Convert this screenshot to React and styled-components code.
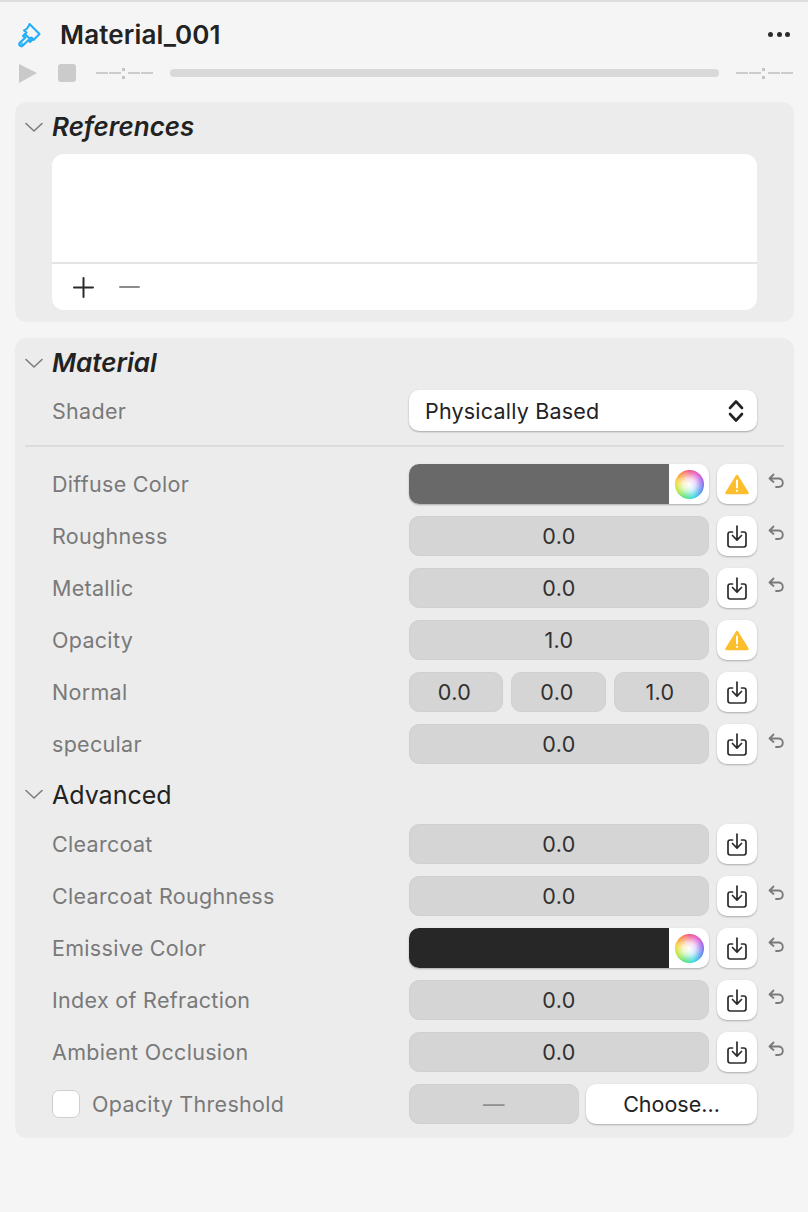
import styled, { createGlobalStyle } from 'styled-components';

const GlobalStyle = createGlobalStyle`
  html, body {
    margin: 0;
    padding: 0;
    background: #f5f5f5;
  }
  body {
    font-family: Inter, "Liberation Sans", sans-serif;
    color: #222222;
  }
`;

const Inspector = styled.div`
  width: 808px;
  height: 1212px;
  box-sizing: border-box;
  border-top: 2px solid #dedede;
  overflow: hidden;
`;

const Header = styled.header`
  display: flex;
  align-items: center;
  height: 54px;
  padding: 11px 18px 0 18px;
  box-sizing: border-box;
  margin-bottom: 5px;
`;

const Title = styled.h1`
  flex: 1;
  margin: 0 0 0 18px;
  font-size: 26px;
  font-weight: 600;
  letter-spacing: 0.15px;
  color: #222222;
`;

const MoreDots = styled.div`
  display: flex;
  gap: 3.5px;

  span {
    width: 5px;
    height: 5px;
    border-radius: 50%;
    background: #2b2b2b;
  }
`;

const Transport = styled.div`
  display: flex;
  align-items: center;
  height: 24px;
  padding: 0 15px 0 19px;
  margin-bottom: 17px;
`;

const StopSquare = styled.div`
  width: 18px;
  height: 18px;
  border-radius: 3px;
  background: #cbcbcb;
  margin: 0 20px 0 21px;
`;

const Time = styled.div`
  display: flex;
  align-items: center;
  width: 57px;
`;

const TimeDash = styled.span`
  width: 12px;
  height: 2px;
  background: #cccccc;
  margin-right: ${(p) => p.$gap || 0}px;
`;

const TimeColon = styled.span`
  width: 3px;
  height: 11px;
  margin: 0 3px 0 1px;
  background: radial-gradient(circle, #c4c4c4 1.5px, transparent 2px) 0 0 / 3px 3px no-repeat,
    radial-gradient(circle, #c4c4c4 1.5px, transparent 2px) 0 100% / 3px 3px no-repeat;
`;

const Progress = styled.div`
  flex: 1;
  height: 8px;
  border-radius: 4px;
  background: #d9d9d9;
  margin: 0 17px;
`;

const Panel = styled.section`
  margin: 0 14px 16px 15px;
  border-radius: 12px;
  background: #ececec;
  padding-bottom: ${(p) => p.$bottom}px;
`;

const SectionHead = styled.div`
  display: flex;
  align-items: center;
  height: ${(p) => p.$height}px;
  padding-left: 10px;
  gap: 9px;
`;

const SectionTitle = styled.h2`
  margin: ${(p) => (p.$plain ? '2px 0 0' : '0 0 1px')};
  font-size: ${(p) => (p.$plain ? 25 : 26)}px;
  font-weight: ${(p) => (p.$plain ? 400 : 600)};
  font-style: ${(p) => (p.$plain ? 'normal' : 'italic')};
  color: #222222;
`;

const ListBox = styled.div`
  margin: 2px 37px 0 37px;
  height: 156px;
  border-radius: 12px;
  background: #ffffff;
  display: flex;
  flex-direction: column;
`;

const ListBody = styled.div`
  height: 108px;
  border-bottom: 2px solid #e4e4e4;
`;

const ListTools = styled.div`
  display: flex;
  align-items: center;
  flex: 1;
  padding-left: 21px;
  gap: 25px;
`;

const ShaderRow = styled.div`
  display: grid;
  grid-template-columns: 357px 348px;
  align-items: center;
  height: 41px;
  margin-top: 2px;
  padding-left: 37px;
`;

const Divider = styled.div`
  height: 2px;
  background: #dcdcdc;
  margin: 14px 10px 17px 10px;
`;

const Rows = styled.div`
  display: flex;
  flex-direction: column;
  gap: 12px;
`;

const Row = styled.div`
  display: grid;
  grid-template-columns: 357px 300px 48px 27px;
  align-items: center;
  height: 40px;
  padding-left: 37px;
`;

const Label = styled.div`
  font-size: 21.5px;
  letter-spacing: 0.3px;
  color: #797979;
  display: flex;
  align-items: center;
`;

const Field = styled.div`
  height: 40px;
  box-sizing: border-box;
  border-radius: 10px;
  background: #d5d5d5;
  border: 1px solid #d0d0d0;
  display: flex;
  align-items: center;
  justify-content: center;
  font-size: 21.5px;
  letter-spacing: 0.4px;
  color: ${(p) => (p.$muted ? '#8f8f8f' : '#303030')};
`;

const FieldTriple = styled.div`
  display: grid;
  grid-template-columns: 94px 95px 95px;
  gap: 8px;

  ${Field} {
    padding-right: 3px;
  }
`;

const ColorWell = styled.div`
  height: 40px;
  border-radius: 10px;
  overflow: hidden;
  display: flex;
  background: #ffffff;
  box-shadow: 0 1px 2px rgba(0, 0, 0, 0.28);
`;

const Swatch = styled.div`
  width: 260px;
  background: ${(p) => p.$color};
`;

const WheelSlot = styled.div`
  flex: 1;
  display: flex;
  align-items: center;
  justify-content: center;
`;

const Wheel = styled.div`
  width: 29px;
  height: 29px;
  border-radius: 50%;
  background: radial-gradient(circle, #ffffff 0%, rgba(255, 255, 255, 0.8) 30%, rgba(255, 255, 255, 0) 80%),
    conic-gradient(#f02f6e, #d832c8, #7a45e8, #2b7cf0, #10cfe0, #2fdc6a, #a6e320, #f5d010, #f77c18, #f02f6e);
`;

const IconButton = styled.div`
  grid-column: 3;
  justify-self: end;
  width: 40px;
  height: 40px;
  border-radius: 10px;
  background: #ffffff;
  box-shadow: 0 1px 2px rgba(0, 0, 0, 0.28);
  display: flex;
  align-items: center;
  justify-content: center;
`;

const Undo = styled.div`
  grid-column: 4;
  align-self: start;
  display: flex;
  justify-content: flex-end;
  padding-top: 9px;
`;

const Select = styled.div`
  height: 41px;
  box-sizing: border-box;
  border-radius: 10px;
  background: #ffffff;
  box-shadow: 0 1px 2px rgba(0, 0, 0, 0.3);
  display: flex;
  align-items: center;
  justify-content: space-between;
  padding: 0 13px 0 16px;
  font-size: 21.5px;
  letter-spacing: 0.2px;
  color: #222222;
`;

const Check = styled.div`
  width: 28px;
  height: 28px;
  box-sizing: border-box;
  border-radius: 7px;
  background: #ffffff;
  border: 1px solid #cfcfcf;
  margin-right: 12px;
`;

const ChooseGroup = styled.div`
  grid-column: 2 / 4;
  display: grid;
  grid-template-columns: 170px 171px;
  column-gap: 7px;
`;

const ChooseButton = styled.div`
  height: 40px;
  border-radius: 10px;
  background: #ffffff;
  box-shadow: 0 1px 2px rgba(0, 0, 0, 0.28);
  display: flex;
  align-items: center;
  justify-content: center;
  font-size: 21.5px;
  color: #222222;
`;

function BrushIcon() {
  return (
    <svg width="24" height="26" viewBox="0 0 24 26" fill="none" stroke="#24aef5" strokeWidth="2.1" strokeLinejoin="round" strokeLinecap="round">
      <path d="M11.5 2 L21.5 12 L15.5 18 L13.5 15.5 L12 17 L7 12 L8.5 10.5 L6 8.5 C8.5 7.5 10.5 5 11.5 2 Z" />
      <path d="M7 12 L5 14 L7.5 15.5 L2 20.5 C0.8 21.8 1 23 2 23.8 C3 24.6 4.2 24.4 5.2 23.3 L10.5 18 L12 20 L14 18" />
      <circle cx="3.8" cy="21.8" r="0.5" />
    </svg>
  );
}

function PlayIcon() {
  return (
    <svg width="18" height="20" viewBox="0 0 18 20">
      <path d="M0 1 L18 10 L0 20 Z" fill="#c9c9c9" />
    </svg>
  );
}

function Chevron() {
  return (
    <svg width="18" height="10" viewBox="0 0 18 10" fill="none" stroke="#7d7d7d" strokeWidth="1.6" strokeLinecap="round" strokeLinejoin="round">
      <path d="M1 1.5 L9 9 L17 1.5" />
    </svg>
  );
}

function PlusIcon() {
  return (
    <svg width="21" height="21" viewBox="0 0 21 21" stroke="#2b2b2b" strokeWidth="2" strokeLinecap="round">
      <path d="M1 10.5 H20 M10.5 1 V20" />
    </svg>
  );
}

function MinusIcon() {
  return (
    <svg width="21" height="4" viewBox="0 0 21 4" stroke="#8c8c8c" strokeWidth="2" strokeLinecap="round">
      <path d="M1 2 H20" />
    </svg>
  );
}

function UpDown() {
  return (
    <svg width="16" height="24" viewBox="0 0 16 24" fill="none" stroke="#222222" strokeWidth="2.6" strokeLinecap="round" strokeLinejoin="round">
      <path d="M2 9 L8 2.5 L14 9 M2 15 L8 21.5 L14 15" />
    </svg>
  );
}

function WarningIcon() {
  return (
    <svg width="24" height="21" viewBox="0 0 24 21">
      <path d="M12 2 L22.5 19 H1.5 Z" fill="#fdbe2e" stroke="#fdbe2e" strokeWidth="2.4" strokeLinejoin="round" />
      <path d="M12 6.5 V13.5" stroke="#ffffff" strokeWidth="1.9" strokeLinecap="round" />
      <circle cx="12" cy="16.8" r="1.1" fill="#ffffff" />
    </svg>
  );
}

function ImportIcon() {
  return (
    <svg width="20" height="23" viewBox="0 0 20 23" fill="none" stroke="#2b2b2b" strokeWidth="1.7" strokeLinecap="round" strokeLinejoin="round">
      <path d="M5.5 7 H3.2 Q1 7 1 9.2 V19.8 Q1 22 3.2 22 H16.8 Q19 22 19 19.8 V9.2 Q19 7 16.8 7 H14.5" />
      <path d="M10 1 V15 M5.5 10.5 L10 15.2 L14.5 10.5" />
    </svg>
  );
}

function UndoIcon() {
  return (
    <svg width="16" height="16" viewBox="0 0 16 16" fill="none" stroke="#7a7a7a" strokeWidth="1.8" strokeLinecap="round" strokeLinejoin="round">
      <path d="M5.5 1.5 L1.5 5.5 L5.5 9 M1.5 5.5 H10.5 C13 5.5 14.8 7.2 14.8 9.8 C14.8 12.4 13 14 10.5 14 H8" />
    </svg>
  );
}

function ColorField({ color }) {
  return (
    <ColorWell>
      <Swatch $color={color} />
      <WheelSlot>
        <Wheel />
      </WheelSlot>
    </ColorWell>
  );
}

function TimeCode() {
  return (
    <Time>
      <TimeDash $gap={1} />
      <TimeDash />
      <TimeColon />
      <TimeDash $gap={1} />
      <TimeDash />
    </Time>
  );
}

function PropRow({ label, children, action = 'import', undo }) {
  return (
    <Row>
      <Label>{label}</Label>
      {children}
      {action && (
        <IconButton>{action === 'warn' ? <WarningIcon /> : <ImportIcon />}</IconButton>
      )}
      {undo && (
        <Undo>
          <UndoIcon />
        </Undo>
      )}
    </Row>
  );
}

export default function App() {
  return (
    <>
      <GlobalStyle />
      <Inspector>
        <Header>
          <BrushIcon />
          <Title>Material_001</Title>
          <MoreDots>
            <span />
            <span />
            <span />
          </MoreDots>
        </Header>
        <Transport>
          <PlayIcon />
          <StopSquare />
          <TimeCode />
          <Progress />
          <TimeCode />
        </Transport>

        <Panel $bottom={12}>
          <SectionHead $height={50}>
            <Chevron />
            <SectionTitle>References</SectionTitle>
          </SectionHead>
          <ListBox>
            <ListBody />
            <ListTools>
              <PlusIcon />
              <MinusIcon />
            </ListTools>
          </ListBox>
        </Panel>

        <Panel $bottom={14}>
          <SectionHead $height={50}>
            <Chevron />
            <SectionTitle>Material</SectionTitle>
          </SectionHead>
          <ShaderRow>
            <Label>Shader</Label>
            <Select>
              Physically Based
              <UpDown />
            </Select>
          </ShaderRow>
          <Divider />
          <Rows>
            <PropRow label="Diffuse Color" action="warn" undo>
              <ColorField color="#696969" />
            </PropRow>
            <PropRow label="Roughness" undo>
              <Field>0.0</Field>
            </PropRow>
            <PropRow label="Metallic" undo>
              <Field>0.0</Field>
            </PropRow>
            <PropRow label="Opacity" action="warn">
              <Field>1.0</Field>
            </PropRow>
            <PropRow label="Normal">
              <FieldTriple>
                <Field>0.0</Field>
                <Field>0.0</Field>
                <Field>1.0</Field>
              </FieldTriple>
            </PropRow>
            <PropRow label="specular" undo>
              <Field>0.0</Field>
            </PropRow>
          </Rows>
          <SectionHead $height={60}>
            <Chevron />
            <SectionTitle $plain>Advanced</SectionTitle>
          </SectionHead>
          <Rows>
            <PropRow label="Clearcoat">
              <Field>0.0</Field>
            </PropRow>
            <PropRow label="Clearcoat Roughness" undo>
              <Field>0.0</Field>
            </PropRow>
            <PropRow label="Emissive Color" undo>
              <ColorField color="#272727" />
            </PropRow>
            <PropRow label="Index of Refraction" undo>
              <Field>0.0</Field>
            </PropRow>
            <PropRow label="Ambient Occlusion" undo>
              <Field>0.0</Field>
            </PropRow>
            <Row>
              <Label>
                <Check />
                Opacity Threshold
              </Label>
              <ChooseGroup>
                <Field $muted>—</Field>
                <ChooseButton>Choose...</ChooseButton>
              </ChooseGroup>
            </Row>
          </Rows>
        </Panel>
      </Inspector>
    </>
  );
}
